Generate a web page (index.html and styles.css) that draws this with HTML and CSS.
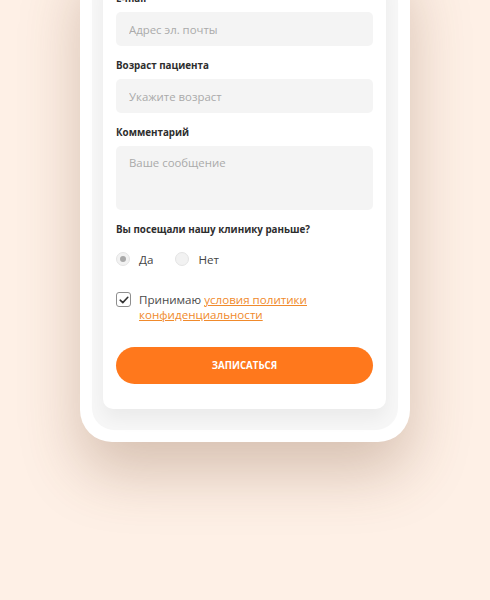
FILE: index.html
```html
<!DOCTYPE html>
<html lang="ru">
<head>
<meta charset="utf-8">
<link rel="stylesheet" href="styles.css">
</head>
<body>
<div class="stage">
  <div class="phone">
    <div class="screen">
      <form class="card">
        <div class="field">
          <label class="label">E-mail</label>
          <input class="input" type="text" placeholder="Адрес эл. почты">
        </div>
        <div class="field">
          <label class="label">Возраст пациента</label>
          <input class="input" type="text" placeholder="Укажите возраст">
        </div>
        <div class="field">
          <label class="label">Комментарий</label>
          <textarea class="input textarea" placeholder="Ваше сообщение"></textarea>
        </div>
        <div class="field">
          <span class="label">Вы посещали нашу клинику раньше?</span>
          <div class="radios">
            <span class="radio-item"><span class="radio checked"></span>Да</span>
            <span class="radio-item"><span class="radio"></span>Нет</span>
          </div>
        </div>
        <div class="agree">
          <span class="checkbox">
            <svg width="10" height="8" viewBox="0 0 10 8"><path d="M1.2 4.2 L3.8 6.6 L8.8 1.3" fill="none" stroke="#333" stroke-width="1.6" stroke-linecap="round" stroke-linejoin="round"/></svg>
          </span>
          <span class="agree-text">Принимаю <a class="link" href="#">условия политики конфиденциальности</a></span>
        </div>
        <button class="submit" type="button">ЗАПИСАТЬСЯ</button>
      </form>
    </div>
  </div>
</div>
</body>
</html>
```

FILE: styles.css
```css
* { box-sizing: border-box; }
html, body { margin: 0; padding: 0; }
body {
  background: #fef0e6;
  font-family: "Open Sans", "Noto Sans", sans-serif;
  height: 600px;
  overflow: hidden;
}
.stage {
  display: flex;
  justify-content: center;
}
.phone {
  width: 330px;
  margin-top: -51px;
  background: #fff;
  padding: 12px;
  border-radius: 32px;
  box-shadow: 0 30px 60px rgba(110, 70, 40, 0.28);
}
.screen {
  background: #f7f7f7;
  border-radius: 22px;
  padding: 11px 12px 21px 11px;
}
.card {
  background: #fff;
  border-radius: 10px;
  padding: 20px 13px 25px 13px;
  box-shadow: 0 10px 18px rgba(0, 0, 0, 0.05);
  display: flex;
  flex-direction: column;
}
.field {
  display: flex;
  flex-direction: column;
  gap: 6px;
  margin-bottom: 13px;
}
.label {
  font-size: 9.8px;
  font-weight: 700;
  line-height: 14px;
  color: #2e2e2e;
}
.input {
  height: 34px;
  border: none;
  border-radius: 5px;
  background: #f4f4f4;
  padding: 0 13px;
  font-family: inherit;
  font-size: 11.4px;
  color: #333;
  outline: none;
}
.input::placeholder { color: #aaa; }
.textarea {
  height: 64px;
  padding: 8px 13px;
  resize: none;
  line-height: 17px;
}
.radios {
  display: flex;
  gap: 22px;
  margin-top: 9px;
  height: 14px;
  align-items: center;
}
.radio-item {
  display: flex;
  align-items: center;
  gap: 9px;
  font-size: 11.6px;
  color: #444;
}
.radio {
  width: 14px;
  height: 14px;
  border-radius: 50%;
  background: #f2f2f2;
  border: 1px solid #e4e4e4;
  display: flex;
  align-items: center;
  justify-content: center;
}
.radio.checked::after {
  content: "";
  width: 6px;
  height: 6px;
  border-radius: 50%;
  background: #a9a9a9;
}
.agree {
  display: flex;
  align-items: flex-start;
  gap: 8px;
  margin-top: 13px;
}
.checkbox {
  flex: none;
  width: 15px;
  height: 15px;
  border: 1px solid #8e8e8e;
  border-radius: 3px;
  display: flex;
  align-items: center;
  justify-content: center;
  margin-top: 0;
}
.agree-text {
  font-size: 11.6px;
  line-height: 15px;
  color: #4a4a4a;
}
.link {
  color: #f08a2c;
  text-decoration: underline;
}
.submit {
  margin-top: 25px;
  height: 37px;
  border: none;
  border-radius: 19px;
  background: #ff781c;
  color: #fff;
  font-family: inherit;
  font-size: 9.7px;
  font-weight: 700;
  letter-spacing: 0;
}
```
